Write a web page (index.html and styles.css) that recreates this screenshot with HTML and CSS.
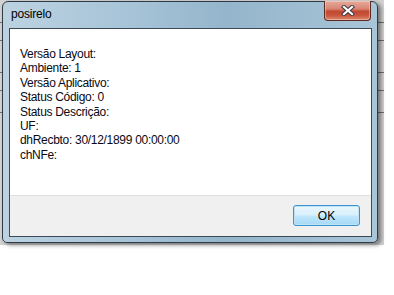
FILE: index.html
```html
<!DOCTYPE html>
<html lang="pt">
<head>
<meta charset="utf-8">
<title>posirelo</title>
<link rel="stylesheet" href="styles.css">
</head>
<body>
<div class="desktop">
  <div class="window">
    <div class="titlebar">
      <span class="title">posirelo</span>
      <div class="close">
        <svg width="14" height="11" viewBox="0 0 14 11">
          <path d="M3 2 L11 9 M11 2 L3 9" stroke="#3b3b45" stroke-width="4.2" stroke-linecap="square" fill="none"/>
          <path d="M3 2 L11 9 M11 2 L3 9" stroke="#ffffff" stroke-width="2.2" stroke-linecap="square" fill="none"/>
        </svg>
      </div>
    </div>
    <div class="client">
      <div class="message">
        <div>Versão Layout:</div>
        <div>Ambiente: 1</div>
        <div>Versão Aplicativo:</div>
        <div>Status Código: 0</div>
        <div>Status Descrição:</div>
        <div>UF:</div>
        <div>dhRecbto: 30/12/1899 00:00:00</div>
        <div>chNFe:</div>
      </div>
      <div class="footer">
        <button class="ok">OK</button>
      </div>
    </div>
  </div>
</div>
</body>
</html>
```
FILE: styles.css
```css
html, body {
  margin: 0;
  padding: 0;
  background: #ffffff;
}
body {
  width: 394px;
  height: 295px;
  overflow: hidden;
  font-family: "Liberation Sans", Arial, sans-serif;
}
.desktop {
  width: 384px;
  height: 245px;
  box-sizing: border-box;
  padding: 1px 0 0 2px;
  background:
    linear-gradient(#6e6e6e, #6e6e6e) 0 22px / 100% 1px no-repeat,
    linear-gradient(#6e6e6e, #6e6e6e) 0 40px / 100% 1px no-repeat,
    linear-gradient(#6e6e6e, #6e6e6e) 0 72px / 100% 1px no-repeat,
    linear-gradient(#6e6e6e, #6e6e6e) 0 90px / 100% 1px no-repeat,
    linear-gradient(#6e6e6e, #6e6e6e) 0 112px / 100% 1px no-repeat,
    #d2d2d2;
}
.window {
  width: 376px;
  height: 242px;
  box-sizing: border-box;
  border: 1px solid #2f3b48;
  border-radius: 6px 6px 5px 5px;
  background: linear-gradient(90deg, #bcd2e1 0%, #a6c3d7 35%, #94b5cb 60%, #a9c5d8 100%);
  box-shadow: 3px 2px 4px rgba(0, 0, 0, 0.45);
  display: flex;
  flex-direction: column;
}
.titlebar {
  height: 26px;
  flex: none;
  display: flex;
  align-items: flex-start;
}
.title {
  padding: 5px 0 0 8px;
  font-size: 12px;
  line-height: 14px;
  letter-spacing: -0.2px;
  color: #000;
}
.close {
  margin-left: auto;
  margin-right: 6px;
  margin-top: -1px;
  width: 47px;
  height: 20px;
  box-sizing: border-box;
  border: 1px solid #5b2a22;
  border-top: none;
  border-radius: 0 0 4px 4px;
  background: linear-gradient(#e6aa9a 0%, #d98774 40%, #c24a33 55%, #c9543b 75%, #dc8b72 100%);
  box-shadow: inset 0 0 0 1px rgba(255, 220, 210, 0.45);
  display: flex;
  align-items: center;
  justify-content: center;
}
.client {
  flex: 1;
  margin: 0 5px 5px 6px;
  border: 1px solid #3c4a58;
  display: flex;
  flex-direction: column;
  background: #f0f0f0;
}
.message {
  flex: 1;
  background: #ffffff;
  border-bottom: 1px solid #dfdfdf;
  padding: 18px 0 0 10px;
  font-size: 12px;
  line-height: 14.4px;
  letter-spacing: -0.3px;
  color: #0a0a14;
}
.footer {
  height: 40px;
  flex: none;
  display: flex;
  justify-content: flex-end;
  align-items: flex-start;
  padding: 9px 11px 0 0;
  box-sizing: border-box;
}
.ok {
  width: 67px;
  height: 21px;
  margin: 0;
  padding: 0;
  border: 1px solid #3c93d0;
  border-radius: 3px;
  background: linear-gradient(#eaf6fd 0%, #d9f0fc 45%, #bee6fd 55%, #a7d9f5 100%);
  box-shadow: inset 0 0 0 1px #bfe4f7;
  font-family: "Liberation Sans", Arial, sans-serif;
  font-size: 12px;
  color: #000;
}
```
